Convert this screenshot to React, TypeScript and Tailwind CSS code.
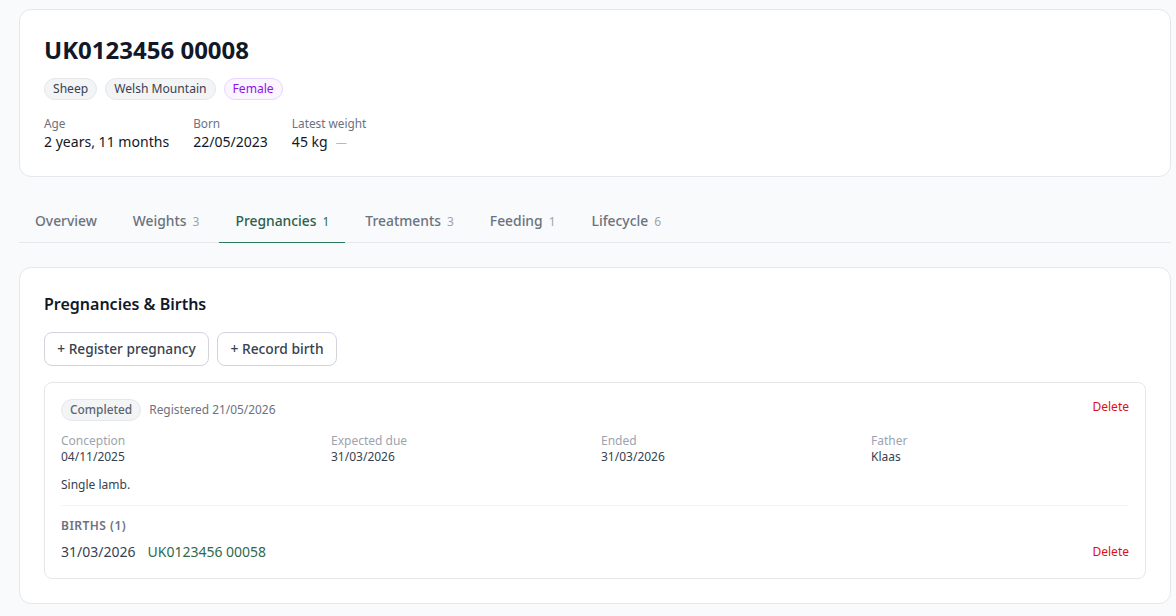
const tabs = [
  { label: 'Overview' },
  { label: 'Weights', count: 3 },
  { label: 'Pregnancies', count: 1, active: true },
  { label: 'Treatments', count: 3 },
  { label: 'Feeding', count: 1 },
  { label: 'Lifecycle', count: 6 },
];

const dates = [
  { label: 'Conception', value: '04/11/2025' },
  { label: 'Expected due', value: '31/03/2026' },
  { label: 'Ended', value: '31/03/2026' },
  { label: 'Father', value: 'Klaas' },
];

export default function App() {
  return (
    <div className="h-[616px] overflow-hidden bg-[#f9fafb] pl-[19px] pr-[5px] pt-[9px] font-['Noto_Sans',sans-serif] text-[#111827]">
      {/* Animal header */}
      <div className="h-[168px] rounded-xl border border-[#e5e7eb] bg-white px-6 pt-6">
        <h1 className="text-2xl font-bold leading-8">UK0123456 00008</h1>
        <div className="mt-3 flex gap-2">
          <span className="flex h-[22px] items-center rounded-full border border-[#e5e7eb] bg-[#f3f4f6] px-2 text-[12.1px] text-[#374151]">Sheep</span>
          <span className="flex h-[22px] items-center rounded-full border border-[#e5e7eb] bg-[#f3f4f6] px-2 text-[12.1px] text-[#374151]">Welsh Mountain</span>
          <span className="flex h-[22px] items-center rounded-full border border-[#e9d5ff] bg-[#faf5ff] px-2 text-[12.1px] text-[#9012e8]">Female</span>
        </div>
        <div className="mt-[15px] flex gap-6">
          <div>
            <div className="text-[11.8px] leading-[17px] text-[#6b7280]">Age</div>
            <div className="text-[14.05px] leading-5">2 years, 11 months</div>
          </div>
          <div>
            <div className="text-[11.8px] leading-[17px] text-[#6b7280]">Born</div>
            <div className="text-[14.05px] leading-5">22/05/2023</div>
          </div>
          <div>
            <div className="text-[11.8px] leading-[17px] text-[#6b7280]">Latest weight</div>
            <div className="flex items-center gap-2 text-[14.05px] leading-5">
              45 kg <span className="text-[11px] text-[#b6bac2]">—</span>
            </div>
          </div>
        </div>
      </div>

      {/* Tabs */}
      <div className="mt-[26px] flex h-10 gap-1 border-b border-[#e5e7eb]">
        {tabs.map((tab) => (
          <div
            key={tab.label}
            className={`-mb-px flex h-10 items-center gap-1.5 border-b px-4 pb-0.5 text-[13.85px] font-medium ${tab.active ? 'border-[#2d7a5a] text-[#2d5f4e]' : 'border-transparent text-[#6b7280]'}`}
          >
            {tab.label}
            {tab.count !== undefined && (
              <span className={`text-xs font-normal ${tab.active ? 'text-[#2d6a4f]' : 'text-[#9ca3af]'}`}>{tab.count}</span>
            )}
          </div>
        ))}
      </div>

      {/* Pregnancies */}
      <div className="mt-6 h-[337px] rounded-xl border border-[#e5e7eb] bg-white px-6 pt-6">
        <h2 className="text-base font-semibold leading-6">Pregnancies &amp; Births</h2>
        <div className="mt-4 flex gap-2">
          <button className="h-[34px] w-[165px] rounded-lg border border-[#d1d5db] bg-white text-[13.7px] font-medium text-[#374151]">+ Register pregnancy</button>
          <button className="h-[34px] w-[120px] rounded-lg border border-[#d1d5db] bg-white text-[13.8px] font-medium text-[#374151]">+ Record birth</button>
        </div>

        <div className="mt-4 h-[197px] rounded-lg border border-[#e5e7eb] px-4 pt-4">
          <div className="flex items-start justify-between">
            <div className="flex items-center gap-2">
              <span className="flex h-[22px] items-center rounded-full border border-[#e5e7eb] bg-[#f3f4f6] px-2 text-[11.9px] font-medium text-[#5b6472]">Completed</span>
              <span className="text-[11.9px] text-[#6b7280]">Registered 21/05/2026</span>
            </div>
            <button className="text-xs leading-4 text-[#dc1020]">Delete</button>
          </div>

          <div className="mt-3 grid grid-cols-4 gap-3">
            {dates.map((d) => (
              <div key={d.label}>
                <div className="text-xs leading-4 text-[#9ca3af]">{d.label}</div>
                <div className="text-xs leading-4 text-[#374151]">{d.value}</div>
              </div>
            ))}
          </div>

          <p className="mt-3 text-xs leading-4 text-[#374151]">Single lamb.</p>

          <div className="mt-3 border-t border-[#f3f4f6] pt-3">
            <div className="text-xs font-semibold leading-4 tracking-[0.04em] text-[#6b7280]">BIRTHS (1)</div>
            <div className="mt-2 flex items-center justify-between">
              <div className="flex gap-3 text-sm leading-5">
                <span className="text-[#374151]">31/03/2026</span>
                <span className="text-[#2d6a4f]">UK0123456 00058</span>
              </div>
              <button className="text-xs leading-4 text-[#dc1020]">Delete</button>
            </div>
          </div>
        </div>
      </div>
    </div>
  );
}
